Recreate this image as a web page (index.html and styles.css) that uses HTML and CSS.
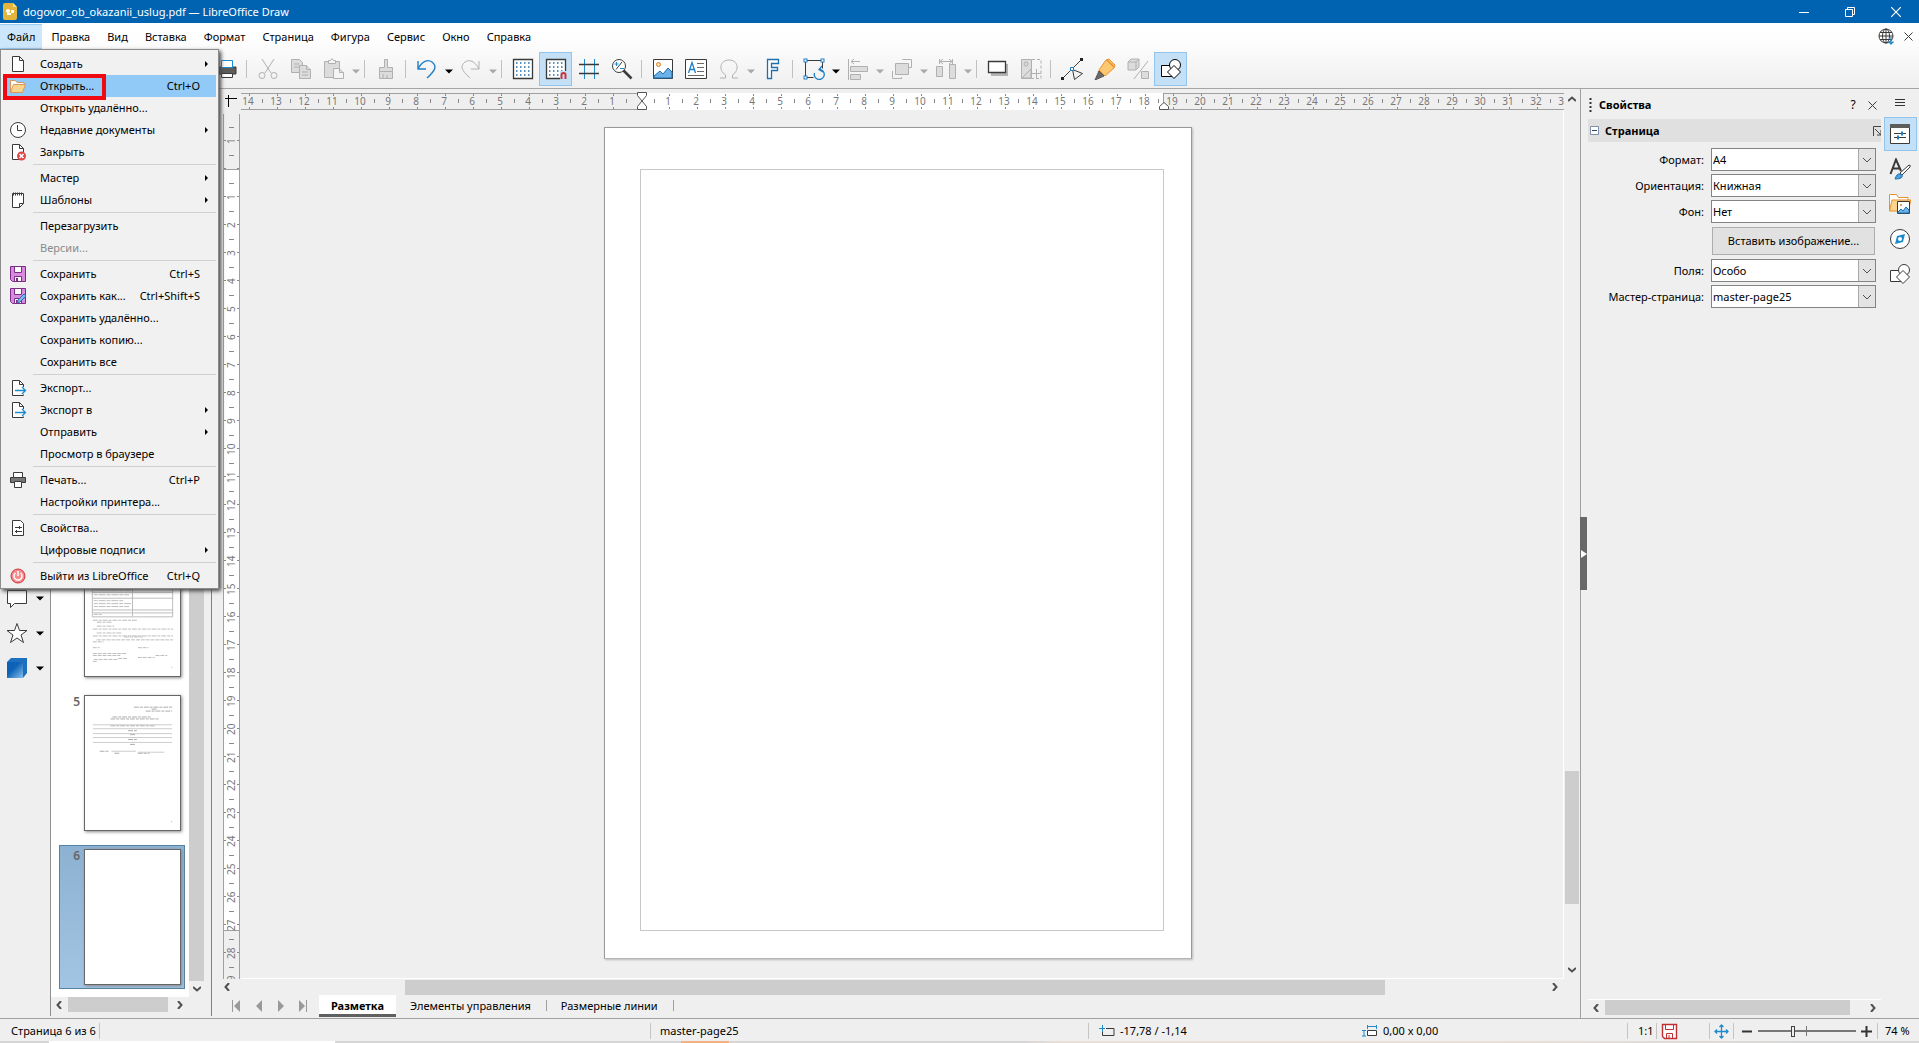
FILE: index.html
```html
<!DOCTYPE html>
<html lang="ru">
<head>
<meta charset="utf-8">
<title>dogovor_ob_okazanii_uslug.pdf — LibreOffice Draw</title>
<link rel="stylesheet" href="styles.css">
</head>
<body>
<svg class="defs" aria-hidden="true">
  <symbol id="doc" viewBox="0 0 16 18"><path d="M2.500 1.500h7l4 4v11h-11z" fill="#fff" stroke="#3a3a38"/><path d="M9.500 1.500v4h4" fill="none" stroke="#3a3a38"/></symbol>
  <symbol id="export" viewBox="0 0 16 18"><path d="M13.500 8V5.500l-4-4h-7v15h11v-1" fill="#fff" stroke="#3a3a38"/><path d="M9.500 1.500v4h4" fill="none" stroke="#3a3a38"/><path d="M5 11.500h10M12 8l3.500 3.500L12 15" fill="none" stroke="#1e8bcd" stroke-width="1.300"/></symbol>
  <symbol id="floppy" viewBox="-1 -1 18 18"><path d="M.500.500h15v15h-13l-2-2z" fill="#d98be0" stroke="#7b2c84"/><path d="M4.500.500h7v6h-7z" fill="#fff" stroke="#7b2c84"/><path d="M4.500 10.500h7v5h-7z" fill="#fff" stroke="#7b2c84"/><path d="M6 12h2v3H6z" fill="#7b2c84"/></symbol>
  <symbol id="tri" viewBox="0 0 8 5"><path d="M0 .500h8l-4 4z" fill="currentColor"/></symbol>
  <symbol id="sub" viewBox="0 0 4 8"><path d="M0 0l4 4-4 4z" fill="#000"/></symbol>
  <symbol id="left" viewBox="0 0 8 8"><path d="M6 0L2.500 4L6 8" fill="none" stroke="#505050" stroke-width="2"/></symbol>
  <symbol id="right" viewBox="0 0 8 8"><path d="M2 0l3.500 4L2 8" fill="none" stroke="#505050" stroke-width="2"/></symbol>
  <symbol id="up" viewBox="0 0 8 8"><path d="M0 6l4-3.500L8 6" fill="none" stroke="#505050" stroke-width="2"/></symbol>
  <symbol id="down" viewBox="0 0 8 8"><path d="M0 2l4 3.500L8 2" fill="none" stroke="#505050" stroke-width="2"/></symbol>
  <symbol id="chev" viewBox="0 0 10 6"><path d="M1 1l4 4 4-4" fill="none" stroke="#505050"/></symbol>
  <symbol id="shapes" viewBox="0 0 22 22"><path d="M1.500 7.500h11v11h-11z" fill="#fff" stroke="currentColor"/><circle cx="15" cy="7" r="5.500" fill="#fff" stroke="currentColor"/><path d="M14 7.500l6.500 6.500-6.500 6.500L7.500 14z" fill="#fff" stroke="currentColor"/></symbol>
  <symbol id="grid" viewBox="0 0 22 22"><path d="M1.500 1.500h19v19h-19z" fill="#fff" stroke="#3a3a38" stroke-width="1.300"/><path d="M4 5h14M4 9h14M4 13h14M4 17h14" stroke="#1e6fae" stroke-width="1.500" stroke-dasharray="1.500 2.500"/></symbol>
</svg>

<header class="titlebar">
  <svg class="app-icon" viewBox="0 0 14 17"><path d="M0 2q0-2 2-2h8l4 4v11q0 2-2 2H2q-2 0-2-2z" fill="#e3b53c"/><path d="M10 0l4 4h-4z" fill="#f6e0a0"/><circle cx="5" cy="8" r="2" fill="#fff"/><path d="M8 7h3v3H8zM4 10h4v2H4z" fill="#fff"/></svg>
  <h1>dogovor_ob_okazanii_uslug.pdf — LibreOffice Draw</h1>
  <div class="window-buttons">
    <button aria-label="Свернуть"><svg viewBox="0 0 10 10"><path d="M0 5.500h10" stroke="#fff"/></svg></button>
    <button aria-label="Восстановить"><svg viewBox="0 0 10 10"><path d="M.500 2.500h7v7h-7zM2.500 2V.500h7v7H8" fill="none" stroke="#fff"/></svg></button>
    <button aria-label="Закрыть окно"><svg viewBox="0 0 10 10"><path d="M0 0l10 10M10 0L0 10" stroke="#fff" stroke-width="1.200"/></svg></button>
  </div>
</header>

<div class="top">
  <nav class="menubar">
    <button class="open">Файл</button><button>Правка</button><button>Вид</button><button>Вставка</button><button>Формат</button><button>Страница</button><button>Фигура</button><button>Сервис</button><button>Окно</button><button>Справка</button>
    <div class="menubar-end">
      <button aria-label="Обновление"><svg width="17" height="17" viewBox="0 0 17 17" fill="none" stroke="#3a3a38"><circle cx="8" cy="8" r="7"/><ellipse cx="8" cy="8" rx="3.500" ry="7"/><path d="M8 1v14M1 8h14M2 4.500h12M2 11.500h12"/><path d="M13 9v7M10.500 13.500L13 16l2.500-2.500" stroke="#1e8bcd" stroke-width="1.300"/></svg></button>
      <button aria-label="Закрыть документ"><svg width="9" height="9" viewBox="0 0 9 9"><path d="M.500.500l8 8M8.500.500l-8 8" stroke="#3a3a38"/></svg></button>
    </div>
  </nav>
  <div class="toolbar">
    <button aria-label="Печать"><svg viewBox="0 0 22 22"><path d="M2 9h18v7H2z" fill="#5c5c5a" stroke="#3a3a38"/><path d="M5.500 2.500h11v7h-11z" fill="#fff" stroke="#1e8bcd"/><path d="M5.500 15.500h11v4h-11z" fill="#fff" stroke="#3a3a38"/></svg></button>
    <hr>
    <button aria-label="Вырезать"><svg viewBox="0 0 22 22" class="dim"><path d="M5 1l9 14M17 1L8 15"/><circle cx="5" cy="17.500" r="3"/><circle cx="17" cy="17.500" r="3"/></svg></button>
    <button aria-label="Копировать"><svg viewBox="0 0 22 22" class="dim fill"><path d="M1.500 1.500h8l3 3v10h-11z"/><path d="M9.500 7.500h7l4 4v9h-11z"/><path d="M16.500 7.500v4h4M4 6h5M4 9h5M12 14h6M12 17h6"/></svg></button>
    <button aria-label="Вставить"><svg viewBox="0 0 22 22" class="dim fill"><path d="M1.500 3.500h15v16h-15z"/><path d="M5.500 5.500v-3h2l1.500-2 1.500 2h2v3z" fill="#f4f4f4"/><path d="M10.500 10.500h6l4 4v6h-10z" fill="#f4f4f4"/><path d="M16.500 10.500v4h4"/></svg></button>
    <button class="drop dim" aria-label="Варианты вставки"><svg><use href="#tri"/></svg></button>
    <hr>
    <button aria-label="Копировать формат"><svg viewBox="0 0 22 22" class="dim fill"><path d="M9.500 1.500h3v8h5v4h-13v-4h5z"/><path d="M4.500 13.500h13v7h-13zM8 20v-4M12 20v-3"/></svg></button>
    <hr>
    <button aria-label="Отменить"><svg viewBox="0 0 22 22" fill="none" stroke="#1e7fc8" stroke-width="1.400"><path d="M2 3v8h8M2 11C6 3 12 1 16 4c5 4 4 8-5 16"/></svg></button>
    <button class="drop" aria-label="Список отмены"><svg><use href="#tri"/></svg></button>
    <button aria-label="Вернуть"><svg viewBox="0 0 22 22" class="dim"><path d="M19 3v8h-8M19 11C15 3 9 1 5 4c-5 4-4 8 5 16"/></svg></button>
    <button class="drop dim" aria-label="Список возврата"><svg><use href="#tri"/></svg></button>
    <hr>
    <button aria-label="Сетка"><svg><use href="#grid"/></svg></button>
    <button class="on" aria-label="Привязка к сетке"><svg viewBox="0 0 22 22"><use href="#grid" width="22" height="22"/><path d="M15 22h7v-9h-7z" fill="#c4e0f7"/><path d="M16.500 21v-4q0-2 2-2t2 2v4" fill="none" stroke="#d13438" stroke-width="2"/></svg></button>
    <button aria-label="Направляющие"><svg viewBox="0 0 22 22" fill="none"><path d="M6.500 1v20M16.500 1v20" stroke="#1e8bcd"/><path d="M1 6.500h20M1 15.500h20" stroke="#3a3a38" stroke-width="1.400"/></svg></button>
    <button aria-label="Масштаб"><svg viewBox="0 0 22 22" fill="none"><circle cx="8" cy="8" r="6.500" fill="#fff" stroke="#3a3a38"/><path d="M12.500 12.500l8 8" stroke="#3a3a38" stroke-width="2.500"/><path d="M5 11.500L11 4" stroke="#3a3a38"/><path d="M3.500 6h4M5.500 4v4M9 10.500h4" stroke="#1e8bcd"/></svg></button>
    <hr>
    <button aria-label="Изображение"><svg viewBox="0 0 22 22"><path d="M1.500 1.500h19v19h-19z" fill="#fff" stroke="#3a3a38"/><circle cx="6.500" cy="6.500" r="2" fill="#fde0b0" stroke="#e07b28"/><path d="M2 18l6-5 3 3 5-6 4 4v6H2z" fill="#6cb2ea" stroke="#1e6fae"/></svg></button>
    <button aria-label="Надпись"><svg viewBox="0 0 22 22"><path d="M.500 1.500h21v19H.500z" fill="#fff" stroke="#3a3a38"/><path d="M3.500 15L7 4.500 10.500 15M5 11.500h4" fill="none" stroke="#1e7fc8" stroke-width="1.300"/><path d="M12 5.500h7M12 9.500h7M12 13.500h7M3 17.500h16" stroke="#6a6a6a"/></svg></button>
    <button aria-label="Символы"><svg viewBox="0 0 22 22" class="dim"><path d="M2 20h5.500v-3C0 12 2 2 11 2s11 10 3.500 15v3H20"/></svg></button>
    <button class="drop dim" aria-label="Список символов"><svg><use href="#tri"/></svg></button>
    <button aria-label="Текст Fontwork"><svg viewBox="0 0 22 22"><path d="M5.500 1.500h11v4h-7v4h6v3h-6v8h-4z" fill="#fff" stroke="#1e6fae" stroke-width="1.300"/></svg></button>
    <hr>
    <button aria-label="Преобразования"><svg viewBox="0 0 22 22" fill="none"><path d="M2.500 2.500h17v8M2.500 2.500v17h8" stroke="#3a3a38"/><path d="M11.500 15a5 5 0 1 0 5-3.500M19 8l-3 3.500 4 2.500" stroke="#1e7fc8" stroke-width="1.300"/><g fill="#fff" stroke="#1e7fc8"><rect x="1" y="1" width="3" height="3"/><rect x="18" y="1" width="3" height="3"/><rect x="1" y="18" width="3" height="3"/></g></svg></button>
    <button class="drop" aria-label="Список преобразований"><svg><use href="#tri"/></svg></button>
    <button aria-label="Выровнять"><svg viewBox="0 0 22 22" class="dim fill"><path d="M1.500 1v21M4 3.500h9M7 1L4 3.500 7 6" fill="none"/><path d="M3.500 8.500h17v5h-17zM3.500 16.500h10v5h-10z"/></svg></button>
    <button class="drop dim" aria-label="Варианты выравнивания"><svg><use href="#tri"/></svg></button>
    <button aria-label="Расположить"><svg viewBox="0 0 22 22" class="dim fill"><path d="M11.500 2V1.500h9v8H18M1.500 13v7.500h9V19" fill="none"/><path d="M4.500 5.500h13v11h-13z"/></svg></button>
    <button class="drop dim" aria-label="Варианты расположения"><svg><use href="#tri"/></svg></button>
    <button aria-label="Распределить"><svg viewBox="0 0 22 22" class="dim fill"><path d="M4.500 1v5M17.500 1v5M5 3.500h12M8 1L5 3.500 8 6M14 1l3 2.500L14 6" fill="none"/><path d="M1.500 8.500h6v10h-6zM14.500 6.500h6v14h-6z"/></svg></button>
    <button class="drop dim" aria-label="Варианты распределения"><svg><use href="#tri"/></svg></button>
    <hr>
    <button aria-label="Тень"><svg viewBox="0 0 22 22"><path d="M4 6h17v12H4z" fill="#b4b4b4"/><path d="M1.500 3.500h17v11h-17z" fill="#fff" stroke="#3a3a38" stroke-width="1.300"/></svg></button>
    <button aria-label="Кадрировать"><svg viewBox="0 0 22 22" class="dim fill"><path d="M1.500 1.500h10v19h-10z"/><circle cx="6" cy="6" r="2"/><path d="M2 20l9-9v9z"/><path d="M12 1.500h9v19h-9" fill="none" stroke-dasharray="3 2"/><path d="M11 15.500h10M16.500 11v10" fill="none"/></svg></button>
    <hr>
    <button aria-label="Изменение узлов"><svg viewBox="0 0 22 22" fill="none" stroke="#3a3a38"><path d="M1.500 20.500l19-19M11.500 11.500l2 10 8-6z"/><path d="M0 19h3v3H0zM19 0h3v3h-3z" fill="#222" stroke="none"/><path d="M9.500 9.500h3v3h-3z" fill="#fff" stroke="#1e7fc8"/></svg></button>
    <button aria-label="Точки соединения"><svg viewBox="0 0 22 22"><path d="M12 2l3-1 6 6-1 3-9 8-6-6z" fill="#fdc872" stroke="#e8912d"/><path d="M13 2l7 7M4 13l6 5" stroke="#e8912d" stroke-width="1.500"/><path d="M5 13l5 5-9 4z" fill="#6a6a6a" stroke="#555"/></svg></button>
    <button aria-label="Вытеснение"><svg viewBox="0 0 22 22" class="dim fill"><path d="M1 4l3-3h8v8l-3 3H1zM1 4h8v8M9 4l3-3"/><path d="M7 21L21 3" fill="none"/><path d="M14.500 13.500h7v7h-7z"/></svg></button>
    <button class="on dark" aria-label="Функции рисования"><svg><use href="#shapes"/></svg></button>
  </div>
</div>

<main class="workspace">
  <aside class="drawbar">
    <button aria-label="Выноски"><svg class="big" viewBox="0 0 22 22"><path d="M1.500 3.500h19v13h-12l-4 4v-4h-3z" fill="#fff" stroke="#3a3a38"/></svg><svg class="tri"><use href="#tri"/></svg></button>
    <button aria-label="Звёзды"><svg class="big" viewBox="0 0 22 22"><path d="M11 1.500l2.500 7h7.500l-6 4.500 2.500 7.500-6.500-4.500-6.500 4.500L7 13 1 8.500h7.500z" fill="#fff" stroke="#3a3a38"/></svg><svg class="tri"><use href="#tri"/></svg></button>
    <button aria-label="Объёмные тела"><svg class="big" viewBox="0 0 22 22"><defs><linearGradient id="cube" x1="0" y1="0" x2="1" y2="1"><stop offset=".4" stop-color="#0c62b4"/><stop offset="1" stop-color="#8cc0ee"/></linearGradient></defs><path d="M1 5l4-4h16v15l-4 5H1z" fill="#1d70c0"/><path d="M1 5h16v16H1z" fill="url(#cube)"/></svg><svg class="tri"><use href="#tri"/></svg></button>
  </aside>

  <aside class="pages">
    <div class="pages-main">
      <ol class="thumbs">
        <li><b></b><div class="sheet fourth">
          <svg viewBox="0 0 97 135" stroke="#bbb" fill="none"><path d="M7.500 30v45.500h82V30M48.500 30v45M8 50.500h82M8 56.500h82M8 68.500h82M8 71.500h82"/><path d="M9 48h38M9 53h36M9 59h30M9 62h38M9 65h36M9 73h8" stroke-dasharray="4 1 7 1"/><path d="M8 79h46M12 81h16M12 85h18M8 88h82M12 92h25M8 95h82M40 96h20" stroke-dasharray="5 1 3 1"/><path d="M12 99h78M8 101h11M8 107h7M54 107h11M8 113h35M8 115h28M9 119h24M34 118h10M54 117h17M72 115h12M8 121h5M88 127h1" stroke-dasharray="4 1"/></svg></div></li>
        <li><b>5</b><div class="sheet">
          <svg viewBox="0 0 97 135" stroke="#ccc" fill="none"><path d="M50 10.500h39M68 12.500h6M62 14.500h27M28 20.500h39M26 22.500h50M26 29.500h45M44 34.500h9M46 38.500h5M44 43.500h9M46 48.500h5M15 55.500h10M30 57.500h5M54 57.500h12M88 127.500h1" stroke-dasharray="5 1 3 1" stroke="#aaa"/><path d="M8 28.500h81M8 32.500h81M8 37.500h81M8 41.500h81M8 46.500h81M27 55.500h25M54 56.500h27"/></svg></div></li>
        <li class="current"><b>6</b><div class="sheet"></div></li>
      </ol>
      <div class="vbar"><i></i><svg><use href="#down"/></svg></div>
    </div>
    <div class="hbar"><svg><use href="#left"/></svg><i></i><svg><use href="#right"/></svg></div>
  </aside>

  <section class="editor">
    <div class="corner"><svg width="12" height="12" viewBox="0 0 12 12"><path d="M0 3.500h12M3.500 0v12" stroke="#000"/></svg></div>
    <div class="hruler"><div class="hactive"></div><div class="hcells"><i>14</i><i>13</i><i>12</i><i>11</i><i>10</i><i>9</i><i>8</i><i>7</i><i>6</i><i>5</i><i>4</i><i>3</i><i>2</i><i>1</i><i></i><i>1</i><i>2</i><i>3</i><i>4</i><i>5</i><i>6</i><i>7</i><i>8</i><i>9</i><i>10</i><i>11</i><i>12</i><i>13</i><i>14</i><i>15</i><i>16</i><i>17</i><i>18</i><i>19</i><i>20</i><i>21</i><i>22</i><i>23</i><i>24</i><i>25</i><i>26</i><i>27</i><i>28</i><i>29</i><i>30</i><i>31</i><i>32</i><i>33</i></div>
      <svg class="indent" viewBox="0 0 12 20"><path d="M1.500 1.500h9v3L6 10l4.500 5.500v3h-9v-3L6 10 1.500 4.500z" fill="#fff" stroke="#555"/></svg>
      <svg class="indent indent-end" viewBox="0 0 12 20"><path d="M6 11.500l4.500 4v3h-9v-3z" fill="#fff" stroke="#555"/></svg></div>
    <div class="vruler"><div class="vactive"></div><div class="vcells"><i>1</i><i></i><i>1</i><i>2</i><i>3</i><i>4</i><i>5</i><i>6</i><i>7</i><i>8</i><i>9</i><i>10</i><i>11</i><i>12</i><i>13</i><i>14</i><i>15</i><i>16</i><i>17</i><i>18</i><i>19</i><i>20</i><i>21</i><i>22</i><i>23</i><i>24</i><i>25</i><i>26</i><i>27</i><i>28</i><i>29</i></div></div>
    <div class="canvas"><div class="paper"><div class="margins"></div></div></div>
    <div class="vscroll"><svg><use href="#up"/></svg><i></i><svg><use href="#down"/></svg></div>
    <div class="hscroll"><svg><use href="#left"/></svg><i></i><svg><use href="#right"/></svg></div>
    <div class="tabs">
      <button class="nav" aria-label="Первый слой"><svg viewBox="0 0 9 12"><path d="M.500 0v12" stroke="#999"/><path d="M8 0v12L2 6z" fill="#999"/></svg></button>
      <button class="nav" aria-label="Предыдущий слой"><svg viewBox="0 0 9 12"><path d="M8 0v12L2 6z" fill="#999"/></svg></button>
      <button class="nav" aria-label="Следующий слой"><svg viewBox="0 0 9 12"><path d="M2 0v12l6-6z" fill="#999"/></svg></button>
      <button class="nav" aria-label="Последний слой"><svg viewBox="0 0 9 12"><path d="M8.500 0v12" stroke="#999"/><path d="M1 0v12l6-6z" fill="#999"/></svg></button>
      <button class="tab active">Разметка</button><button class="tab">Элементы управления</button><hr><button class="tab">Размерные линии</button><hr>
    </div>
  </section>

  <aside class="sidebar">
    <button class="grip" aria-label="Скрыть боковую панель"><svg width="6" height="8" viewBox="0 0 6 8"><path d="M0 0l6 4-6 4z" fill="#fff"/></svg></button>
    <div class="deck">
      <div class="deck-title"><svg width="3" height="14" viewBox="0 0 3 14"><path d="M1.500 0v14" stroke="#333" stroke-width="2" stroke-dasharray="2 2"/></svg><h2>Свойства</h2><button aria-label="Справка">?</button><button aria-label="Закрыть панель"><svg width="9" height="9" viewBox="0 0 9 9"><path d="M.500.500l8 8M8.500.500l-8 8" stroke="#3a3a38"/></svg></button></div>
      <div class="panel-title"><svg width="9" height="9" viewBox="0 0 9 9"><path d="M.500.500h8v8h-8z" fill="#fff" stroke="#8090a8"/><path d="M2 4.500h5" stroke="#30466e"/></svg><h3>Страница</h3><svg class="more" width="8" height="10" viewBox="0 0 8 10"><path d="M.500 10V.500H8M2 3l6 6M8 4v5H4" fill="none" stroke="#444"/></svg></div>
      <form class="fields">
        <label for="format">Формат:</label><div class="combo"><select id="format"><option>A4</option></select><span><svg><use href="#chev"/></svg></span></div>
        <label for="orient">Ориентация:</label><div class="combo"><select id="orient"><option>Книжная</option></select><span><svg><use href="#chev"/></svg></span></div>
        <label for="fill">Фон:</label><div class="combo"><select id="fill"><option>Нет</option></select><span><svg><use href="#chev"/></svg></span></div>
        <button type="button">Вставить изображение...</button>
        <label for="margin">Поля:</label><div class="combo"><select id="margin"><option>Особо</option></select><span><svg><use href="#chev"/></svg></span></div>
        <label for="master">Мастер-страница:</label><div class="combo"><select id="master"><option>master-page25</option></select><span><svg><use href="#chev"/></svg></span></div>
      </form>
      <div class="hbar deck-scroll"><svg><use href="#left"/></svg><i></i><svg><use href="#right"/></svg></div>
    </div>
    <div class="decks">
      <button class="burger" aria-label="Настройки панели"><svg viewBox="0 0 22 22"><path d="M6 7.500h10M6 10.500h10M6 13.500h10" stroke="#333"/></svg></button>
      <button class="on" aria-label="Свойства"><svg viewBox="0 0 22 22"><path d="M1.500 1.500h19v19h-19z" fill="#fff" stroke="#3a3a38"/><path d="M1 1h20v4H1z" fill="#5c5c5a"/><path d="M5 10.500h12M5 14.500h12" stroke="#3a3a38"/><path d="M13 8.500v4M9 12.500v4" stroke="#1e7fc8" stroke-width="2"/></svg></button>
      <button aria-label="Стили"><svg viewBox="0 0 22 22"><path d="M1.500 16L7 1.500 12 13M4 10.500h7" fill="none" stroke="#3a3a38" stroke-width="2"/><path d="M11 15l9-8q2 0 1 2l-8 8z" fill="#fff" stroke="#3a3a38"/><path d="M6 21q2-6 5-5 4 1 1 4-2 1-6 1z" fill="#4aa3e0" stroke="#1e6fae"/></svg></button>
      <button aria-label="Галерея"><svg viewBox="0 0 22 22"><path d="M.500 18V1.500h7l2 3H19V7" fill="#fff" stroke="#e8912d"/><path d="M3 7h19l-3 11H.500z" fill="#fbd58d" stroke="#e8912d"/><path d="M8.500 8.500h12v12h-12z" fill="#fff" stroke="#3a3a38"/><circle cx="12" cy="12" r="1" fill="#e07b28"/><path d="M9 19l3-3 2 2 3-4 3 3v3H9z" fill="#6cb2ea" stroke="#1e6fae"/></svg></button>
      <button aria-label="Навигатор"><svg viewBox="0 0 22 22"><circle cx="11" cy="11" r="9.500" fill="#fff" stroke="#3a3a38"/><path d="M16 6l-2 8-8 2 2-8z" fill="#1e8bcd"/><circle cx="11" cy="11" r="2" fill="#fff"/></svg></button>
      <button aria-label="Фигуры"><svg><use href="#shapes"/></svg></button>
    </div>
  </aside>

  <div class="menu" role="menu">
    <button><svg><use href="#doc"/></svg><span>Создать</span><svg class="sub"><use href="#sub"/></svg></button>
    <button class="hot"><svg viewBox="0 0 18 16"><path d="M1.500 14V2.500h5l1.500 2h7V7" fill="#fff" stroke="#d9965a"/><path d="M4.500 6.500h12l-3 8h-12z" fill="#fbd58d" stroke="#d9965a"/></svg><span>Открыть...</span><kbd>Ctrl+O</kbd></button>
    <button><span>Открыть удалённо...</span></button>
    <button><svg viewBox="-1 -1 18 18"><circle cx="8" cy="8" r="7.500" fill="#fff" stroke="#3a3a38"/><path d="M7.500 3v5.500H12" fill="none" stroke="#3a3a38"/></svg><span>Недавние документы</span><svg class="sub"><use href="#sub"/></svg></button>
    <button><svg viewBox="0 0 16 18"><use href="#doc" width="16" height="18"/><circle cx="11.500" cy="13" r="4.500" fill="#e04848"/><path d="M9.500 11l4 4M13.500 11l-4 4" stroke="#fff" stroke-width="1.500"/></svg><span>Закрыть</span></button>
    <hr>
    <button><span>Мастер</span><svg class="sub"><use href="#sub"/></svg></button>
    <button><svg viewBox="0 0 16 18"><path d="M2.500 2.500h11v10l-4 4h-7z" fill="#fff" stroke="#3a3a38"/><path d="M13.500 12.500h-4v4" fill="none" stroke="#3a3a38"/><path d="M3 3h10" stroke="#3a3a38" stroke-width="3" stroke-dasharray="1 1"/></svg><span>Шаблоны</span><svg class="sub"><use href="#sub"/></svg></button>
    <hr>
    <button><span>Перезагрузить</span></button>
    <button disabled><span>Версии...</span></button>
    <hr>
    <button><svg><use href="#floppy"/></svg><span>Сохранить</span><kbd>Ctrl+S</kbd></button>
    <button><svg viewBox="-1 -1 18 18"><use href="#floppy" x="-1" y="-1" width="18" height="18"/><path d="M7 15l1-3 6-6 2 2-6 6z" fill="#7ab8ec" stroke="#2a72b0"/></svg><span>Сохранить как...</span><kbd>Ctrl+Shift+S</kbd></button>
    <button><span>Сохранить удалённо...</span></button>
    <button><span>Сохранить копию...</span></button>
    <button><span>Сохранить все</span></button>
    <hr>
    <button><svg><use href="#export"/></svg><span>Экспорт...</span></button>
    <button><svg><use href="#export"/></svg><span>Экспорт в</span><svg class="sub"><use href="#sub"/></svg></button>
    <button><span>Отправить</span><svg class="sub"><use href="#sub"/></svg></button>
    <button><span>Просмотр в браузере</span></button>
    <hr>
    <button><svg viewBox="-1 -1 18 18"><path d="M.500 5.500h15v5H.500z" fill="#777" stroke="#3a3a38"/><path d="M3.500.500h9v5h-9zM4.500 9.500h7v6h-7z" fill="#fff" stroke="#3a3a38"/></svg><span>Печать...</span><kbd>Ctrl+P</kbd></button>
    <button><span>Настройки принтера...</span></button>
    <hr>
    <button><svg viewBox="-1 -1 18 18"><path d="M2.500.500h8l3 3v12h-11z" fill="#fff" stroke="#3a3a38"/><path d="M5 7.500h7M5 11.500h7M9.500 6v3M6.500 10v3" stroke="#3a3a38"/></svg><span>Свойства...</span></button>
    <button><span>Цифровые подписи</span><svg class="sub"><use href="#sub"/></svg></button>
    <hr>
    <button><svg viewBox="-1 -1 18 18"><circle cx="8" cy="8" r="7" fill="#f68a8e" stroke="#d13438"/><path d="M5.500 5a4 4 0 1 0 5 0M8 3v5" fill="none" stroke="#fff" stroke-width="1.500"/></svg><span>Выйти из LibreOffice</span><kbd>Ctrl+Q</kbd></button>
    <div class="marker"></div>
  </div>
</main>

<footer class="statusbar">
  <span class="s-page">Страница 6 из 6</span>
  <span class="s-master">master-page25</span>
  <span class="s-pos"><svg width="16" height="12" viewBox="0 0 16 12"><path d="M7 3.500h8v7H3.500V7" fill="none" stroke="#3a3a38"/><path d="M0 3.500h6M3.500 0v7" stroke="#1e8bcd"/></svg>-17,78 / -1,14</span>
  <span class="s-size"><svg width="16" height="12" viewBox="0 0 16 12"><path d="M5.500 5.500h9v5h-9z" fill="#fff" stroke="#3a3a38"/><path d="M5 1.500h10M5.500 0v4M14.500 0v4M0 5.500h4M0 11h4M2 5v6" stroke="#1e8bcd"/></svg>0,00 x 0,00</span>
  <span class="s-scale">1:1</span>
  <span class="s-save"><svg width="17" height="17" viewBox="0 0 17 17"><path d="M1.500 1.500h14v14h-12l-2-2z" fill="#fff" stroke="#c03030" stroke-width="1.400"/><path d="M4.500 1.500h8v5h-8zM5.500 10.500h6v5h-6zM8 12v3" fill="none" stroke="#c03030"/></svg></span>
  <span class="s-fit"><svg width="15" height="15" viewBox="0 0 15 15" fill="none" stroke="#1e8bcd" stroke-width="1.300"><path d="M7.500 1v13M1 7.500h13M5.500 3l2-2 2 2M5.500 12l2 2 2-2M3 5.500l-2 2 2 2M12 5.500l2 2-2 2"/></svg></span>
  <span class="s-zoom"><button aria-label="Уменьшить"><svg width="11" height="11" viewBox="0 0 11 11"><path d="M0 5.500h10" stroke="#333" stroke-width="2"/></svg></button><input type="range" aria-label="Масштаб" min="0" max="100" value="35"><button aria-label="Увеличить"><svg width="11" height="11" viewBox="0 0 11 11"><path d="M0 5.500h11M5.500 0v11" stroke="#333" stroke-width="2"/></svg></button></span>
  <span class="s-percent">74 %</span>
</footer>
<div class="desktop-edge"></div>
</body>
</html>
```

FILE: styles.css
```css
* { box-sizing: border-box; }
body {
  margin: 0;
  height: 100vh;
  display: flex;
  flex-direction: column;
  overflow: hidden;
  background: #efefef;
  color: #000;
  font: 11px/16px "Noto Sans", "Open Sans", sans-serif;
}
button {
  display: flex;
  align-items: center;
  justify-content: center;
  padding: 0;
  border: 0;
  background: none;
  color: inherit;
  font: inherit;
}
h1, h2, h3 { margin: 0; font-size: 11px; }
.defs { position: absolute; width: 0; height: 0; }
svg { flex: none; display: block; }
i, kbd { font: inherit; }

/* title bar */
.titlebar { height: 23px; flex: none; display: flex; align-items: center; gap: 6px; padding-left: 3px; background: #0063b1; color: #fff; }
.titlebar h1 { flex: 1; font-weight: 400; }
.app-icon { width: 14px; height: 17px; }
.window-buttons { display: flex; }
.window-buttons button { width: 46px; height: 20px; }
.window-buttons svg { width: 10px; height: 10px; }

/* menu bar and toolbar */
.top { flex: none; height: 66px; background: linear-gradient(#fff, #fdfdfd 30%, #efefef); border-bottom: 1px solid #a5a5a5; }
.menubar { display: flex; gap: 1px; height: 26px; padding-top: 1px; }
.menubar > button { padding: 0 8px; border: 1px solid transparent; border-width: 1px 0; }
.menubar > .open { padding: 0 7px; background: #cce6fb; border-color: #9acdf5; }
.menubar-end { margin-left: auto; display: flex; gap: 9px; padding-right: 6px; }
.toolbar { display: flex; height: 34px; margin: 3px 0 0 210px; }
.toolbar button { width: 33px; height: 34px; }
.toolbar svg { width: 22px; height: 22px; }
.toolbar svg.dim { fill: none; stroke: #b0b0b0; stroke-width: 1; }
.toolbar svg.dim.fill { fill: #dcdcdc; }
.toolbar .drop { width: 11px; }
.toolbar .drop svg { width: 8px; height: 5px; margin-top: 4px; }
.toolbar .drop.dim { color: #a8a8a8; }
.toolbar hr { width: 1px; height: 18px; margin: 8px 4px 8px 3px; border: 0; background: #c0c0c0; }
.toolbar .on, .decks .on { background: #c4e0f7; border: 1px solid #92c4ec; }

/* work area */
.workspace { position: relative; flex: 1; min-height: 0; display: flex; border-bottom: 1px solid #a0a0a0; }
.drawbar { width: 50px; display: flex; flex-direction: column; gap: 1px; padding: 492px 0 0 6px; }
.drawbar button { height: 34px; justify-content: flex-start; gap: 8px; }
.drawbar .big { width: 22px; height: 22px; }
.drawbar .tri { width: 8px; height: 5px; }

.pages { width: 162px; display: flex; flex-direction: column; border-left: 1px solid #909090; border-right: 1px solid #808080; margin-bottom: 2px; padding: 0 7px 4px 0; }
.pages-main { flex: 1; min-height: 0; display: flex; }
.thumbs { flex: 1; display: flex; flex-direction: column; justify-content: flex-end; gap: 10px; margin: 0; padding: 0 4px 8px 8px; list-style: none; background: #fff; overflow: hidden; }
.thumbs li { height: 144px; flex: none; display: flex; gap: 4px; padding: 3px; border: 1px solid transparent; }
.thumbs .current { background: linear-gradient(#8db1d0, #a1c5e3); border-color: #5482a4; }
.thumbs b { width: 17px; text-align: right; font-size: 12px; font-weight: 600; color: #666; line-height: 14px; }
.sheet { flex: 1; height: 136px; background: #fff; border: 1px solid #666; box-shadow: 1px 1px 3px #888; }
.sheet svg { width: 100%; height: 100%; }
.vbar { width: 15px; display: flex; flex-direction: column; align-items: center; gap: 4px; padding-bottom: 4px; }
.vbar i { flex: 1; width: 15px; background: #cdcdcd; }
.vbar svg, .hbar svg, .vscroll svg, .hscroll svg { width: 8px; height: 8px; }
.hbar { height: 15px; display: flex; align-items: center; gap: 5px; padding: 0 20px 0 4px; }
.hbar i { flex: 1; height: 15px; background: #cdcdcd; }
.pages .hbar i { margin-right: 3px; }

.editor { flex: 1; min-width: 0; display: grid; grid-template: 21px minmax(0, 1fr) 16px 23px / 29px minmax(0, 1fr) 16px; }
.corner { padding: 6px 0 0 13px; }
.hruler { position: relative; height: 17px; margin-top: 4px; border: solid #a0a0a0; border-width: 1px 0; color: #777; }
.hcells { position: relative; display: flex; overflow: hidden; }
.hcells i { flex: none; width: 28px; height: 15px; text-align: center; font-size: 10px; line-height: 14px; padding-right: 2px;
  background: linear-gradient(#888, #888) 14px 0 / 1px 2px no-repeat, linear-gradient(#888, #888) 14px 13px / 1px 2px no-repeat, linear-gradient(#888, #888) 27px 5px / 1px 4px no-repeat; }
.hcells i:first-child { margin-left: -6px; }
.hactive { position: absolute; top: -1px; left: 400px; width: 523px; height: 17px; background: #fff; border-right: 1px solid #a0a0a0; }
.indent { position: absolute; top: -3px; left: 395px; width: 12px; height: 20px; }
.indent-end { left: 917px; }
.vruler { position: relative; grid-row: 2; margin: 4px 1px 0 0; width: 17px; justify-self: end; overflow: hidden; border: solid #a0a0a0; border-width: 0 1px; color: #777; }
.vcells { position: relative; padding-top: 13px; }
.vcells i { display: block; width: 15px; height: 28px; text-align: center; font-size: 10px; line-height: 15px; writing-mode: vertical-rl; transform: rotate(180deg);
  background: linear-gradient(#888, #888) 0 14px / 2px 1px no-repeat, linear-gradient(#888, #888) 13px 14px / 2px 1px no-repeat, linear-gradient(#888, #888) 5px 27px / 5px 1px no-repeat; }
.vactive { position: absolute; top: 55px; left: -1px; width: 17px; height: 762px; background: #fff; border: solid #a0a0a0; border-width: 1px 0; }
.canvas { grid-area: 2 / 2; overflow: hidden; padding: 17px 0 0 363px; border-bottom: 1px solid #fff; border-right: 1px solid #fff; }
.paper { width: 588px; height: 832px; padding: 41px 27px 27px 35px; background: #fff; border: 1px solid #999; border-bottom-color: #b4b4b4; box-shadow: 1px 1px 2px #bbb; }
.margins { height: 762px; border: 1px solid #c8c8c8; }
.vscroll { grid-area: 1 / 3 / 3; display: flex; flex-direction: column; align-items: center; padding: 6px 0 5px; }
.vscroll i { width: 14px; height: 133px; margin: auto 0 62px; background: #cdcdcd; }
.hscroll { grid-area: 3 / 1 / auto / 3; display: flex; align-items: center; justify-content: space-between; padding: 0 5px 0 11px; }
.hscroll i { width: 980px; height: 15px; margin: 0 0 0 7px; background: #cdcdcd; }
.tabs { grid-area: 4 / 1 / auto / 4; display: flex; padding-left: 13px; }
.tabs hr { width: 1px; height: 11px; margin: 5px 0 0; border: 0; background: #a0a0a0; }
.nav { width: 22px; height: 22px; }
.nav svg { width: 9px; height: 12px; }
.nav:nth-child(4) { margin-right: 6px; }
.tab { height: 22px; padding: 0 15px 0 14px; }
.tab.active { background: #fff; font-weight: 700; padding: 3px 12px 0; border-bottom: 3px solid #606060; }

/* sidebar */
.sidebar { position: relative; width: 339px; display: flex; border-left: 1px solid #a0a0a0; padding-left: 7px; }
.grip { position: absolute; left: -1px; top: 428px; width: 7px; height: 73px; background: #686868; }
.deck { flex: 1; display: flex; flex-direction: column; padding-bottom: 3px; }
.deck-title { height: 30px; display: flex; align-items: center; padding: 2px 3px 0 1px; gap: 7px; }
.deck-title h2, .panel-title h3 { flex: 1; font-weight: 700; }
.deck-title button { width: 12px; font-size: 12px; }
.panel-title { height: 23px; display: flex; align-items: center; gap: 6px; padding-left: 2px; background: #e0e0e0; }
.fields { display: grid; grid-template-columns: 116px 165px; column-gap: 7px; row-gap: 3px; padding-top: 6px; flex: 1; align-content: start; }
.fields label { text-align: right; line-height: 23px; }
.combo { display: grid; grid-template-columns: 1fr 17px; height: 23px; border: 1px solid #848484; background: #fff; }
.combo select { grid-area: 1 / 1 / 2 / 3; appearance: none; border: 0; background: none; padding: 0 1px; font: inherit; color: #000; }
.combo span { grid-area: 1 / 2; display: grid; place-items: center; background: #e3e3e3; border-left: 1px solid #a8a8a8; pointer-events: none; }
.combo span svg { width: 10px; height: 6px; }
.fields button { grid-column: 2; height: 28px; margin: 1px; background: #e1e1e1; border: 1px solid #adadad; }
.deck-scroll { padding: 0 4px; border-top: 1px solid #fff; height: 16px; }
.deck-scroll i { margin-right: 14px; }
.decks { width: 38px; display: flex; flex-direction: column; align-items: center; gap: 1px; color: #3a3a38; }
.decks button { width: 33px; height: 34px; }
.decks svg { width: 22px; height: 22px; }
.decks .burger { height: 27px; }

/* drop-down menu */
.menu { position: absolute; left: 0; top: -40px; width: 219px; padding: 3px 2px 1px; background: #f1f1f1; border: 1px solid #8c8c8c; box-shadow: 2px 2px 4px #444; }
.menu button { width: 100%; height: 22px; display: grid; grid-template-columns: 37px 1fr auto; justify-items: start; text-align: left; padding-right: 16px; }
.menu button > span { grid-area: 1 / 2; white-space: nowrap; }
.menu button > svg { grid-area: 1 / 1; width: 18px; height: 18px; margin-left: 6px; }
.menu button > .sub { grid-area: 1 / 3; width: 3px; height: 6px; margin-right: -8px; }
.menu kbd { grid-area: 1 / 3; }
.menu .hot { background: #91c9f7; }
.menu button:disabled { color: #8a8a8a; }
.menu hr { height: 1px; margin: 1px 0 2px 30px; border: 0; background: #d0d0d0; }
.marker { position: absolute; left: 2px; top: 24px; width: 103px; height: 26px; border: 4px solid #ee0a10; }

/* status bar */
.statusbar { height: 22px; flex: none; display: flex; align-items: center; padding-top: 2px; }
.statusbar > span { height: 16px; display: flex; align-items: center; gap: 5px; border-left: 1px solid #c4c4c4; }
.statusbar .s-page { border: 0; padding-left: 11px; width: 100px; border-right: 1px solid #c4c4c4; }
.s-master { margin-left: 550px; padding-left: 9px; width: 438px; }
.s-pos { flex: 1; padding-left: 10px; }
.statusbar .s-size { border: 0; width: 265px; }
.s-scale { width: 29px; padding-left: 10px; }
.s-save { width: 53px; padding-left: 4px; }
.s-fit { width: 24px; padding-left: 4px; }
.s-zoom { width: 144px; padding-left: 8px; }
.s-percent { width: 42px; padding-left: 7px; }
.s-zoom input { appearance: none; width: 98px; height: 12px; margin: 0; background: linear-gradient(#777, #777) 48px 1px / 1px 10px no-repeat, linear-gradient(#777, #777) 0 5px / 98px 2px no-repeat; }
.s-zoom input::-webkit-slider-thumb { appearance: none; width: 4px; height: 11px; background: #eee; border: 1px solid #444; }
.desktop-edge { flex: none; height: 2px; background: linear-gradient(90deg, #d4d4d4 49px, #fff 49px, #fff 335px, #d6d6d6 335px, #d6d6d6 681px, #f5b183 681px, #f5b183 729px, #d6d6d6 729px, #d6d6d6 1023px, #eadfd6 1060px, #eadfd6 1500px, #d8d8d8 1800px); }
```
